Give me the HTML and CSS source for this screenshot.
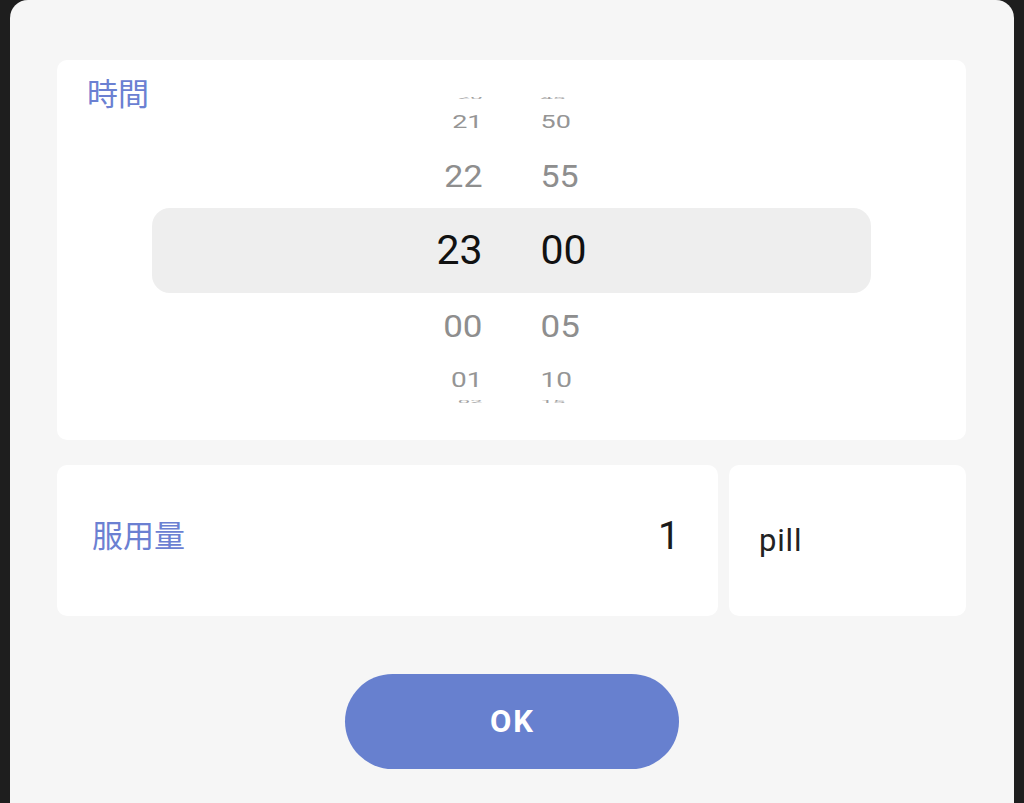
FILE: index.html
```html
<!DOCTYPE html>
<html lang="ja">
<head>
<meta charset="utf-8">
<title>服用時間</title>
<link rel="stylesheet" href="styles.css">
</head>
<body>
<div class="sheet">
  <section class="card time-card">
    <div class="label time-label">時間</div>
    <div class="wheel">
      <div class="row r-edge r-top"><span class="h">20</span><span class="m">45</span></div>
      <div class="row r-far"><span class="h">21</span><span class="m">50</span></div>
      <div class="row r-near r-near-top"><span class="h">22</span><span class="m">55</span></div>
      <div class="row r-sel"><span class="h">23</span><span class="m">00</span></div>
      <div class="row r-near r-near-bot"><span class="h">00</span><span class="m">05</span></div>
      <div class="row r-far r-far-bot"><span class="h">01</span><span class="m">10</span></div>
      <div class="row r-edge r-bot"><span class="h">02</span><span class="m">15</span></div>
    </div>
  </section>
  <div class="dose-row">
    <section class="card qty-card">
      <div class="label qty-label">服用量</div>
      <div class="qty-value">1</div>
    </section>
    <section class="card unit-card">
      <div class="unit">pill</div>
    </section>
  </div>
  <div class="actions">
    <button class="ok-btn">OK</button>
  </div>
</div>
</body>
</html>
```

FILE: styles.css
```css
* { box-sizing: border-box; }

html, body {
  margin: 0;
  height: 100%;
}

body {
  background: #1e1e1e;
  font-family: Roboto, "Noto Sans CJK JP", sans-serif;
  overflow: hidden;
}

.sheet {
  margin: 0 10px;
  height: 803px;
  background: #f6f6f6;
  border-radius: 18px 18px 0 0;
  padding: 60px 48px 0 47px;
  display: flex;
  flex-direction: column;
}

.card {
  background: #ffffff;
  border-radius: 10px;
}

.label {
  font-family: "Noto Sans CJK JP", sans-serif;
  color: #6b80d2;
  font-size: 31px;
  line-height: 31px;
}

.time-card {
  height: 380px;
  padding: 16px 0 37px;
  display: flex;
  flex-direction: column;
}

.time-label {
  margin-left: 30px;
}

.wheel {
  margin-top: -10px;
  height: 306px;
  overflow: hidden;
  display: flex;
  flex-direction: column;
}

.row {
  display: grid;
  grid-template-columns: 1fr 1fr;
  column-gap: 58px;
  align-items: center;
  color: #8e8e8e;
  flex: none;
}

.row .h { text-align: right; }
.row .m { text-align: left; }

.row span {
  display: block;
  line-height: 1;
}

.r-edge {
  height: 11px;
  font-size: 22px;
  color: #a0a0a0;
}
.r-top { align-items: start; }
.r-top span { transform: translateY(-10px) scaleY(0.16); }
.r-bot { height: 10px; align-items: start; }
.r-bot span { transform: translateY(-2px) scaleY(0.16); }

.r-far {
  height: 29px;
  font-size: 27px;
  color: #959595;
}
.r-far span { transform: scaleY(0.68); }
.r-far-bot { height: 26px; font-size: 28px; }
.r-far-bot span { transform: scaleY(0.7); }

.r-near {
  font-size: 34px;
}
.r-near span { transform: scaleY(0.9); }
.r-near-top { height: 71px; padding-top: 7px; }
.r-near-bot { height: 74px; padding-bottom: 8px; font-size: 35px; }
.r-near-bot span { transform: scaleY(0.88); }

.r-sel {
  height: 85px;
  margin: 0 95px;
  background: #eeeeee;
  border-radius: 18px;
  font-size: 41px;
  color: #111111;
}

.dose-row {
  margin-top: 25px;
  height: 151px;
  display: flex;
  gap: 11px;
}

.qty-card {
  flex: 1;
  display: flex;
  align-items: center;
  justify-content: space-between;
  padding: 0 38px 9px 35px;
}

.qty-label {
  margin-bottom: 6px;
}

.qty-value {
  font-size: 39px;
  color: #1b1b1b;
  line-height: 1;
}

.unit-card {
  width: 237px;
  display: flex;
  align-items: center;
  padding: 0 30px 0 30px;
}

.unit {
  font-size: 31px;
  color: #222222;
  letter-spacing: 0.8px;
  line-height: 1;
}

.actions {
  margin-top: 58px;
  display: flex;
  justify-content: center;
}

.ok-btn {
  width: 334px;
  height: 95px;
  border: none;
  border-radius: 48px;
  background: #6780cf;
  color: #ffffff;
  font-family: Roboto, sans-serif;
  font-weight: 700;
  font-size: 31px;
  letter-spacing: 2px;
  padding: 0 0 0 2px;
}
```
